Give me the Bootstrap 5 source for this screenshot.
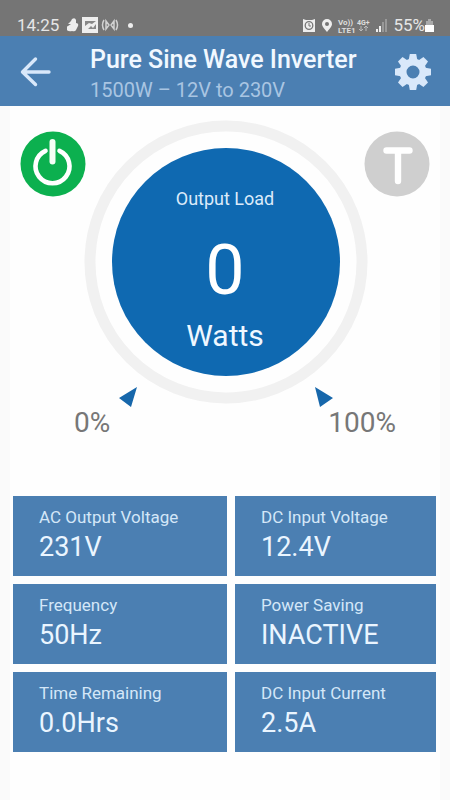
<!DOCTYPE html>
<html lang="en">
<head>
<meta charset="utf-8">
<meta name="viewport" content="width=device-width, initial-scale=1">
<title>Pure Sine Wave Inverter</title>
<link href="https://cdn.jsdelivr.net/npm/bootstrap@5.3.0/dist/css/bootstrap.min.css" rel="stylesheet">
<style>
  body { font-family: Roboto, "Liberation Sans", sans-serif; background: #fefefe; }
  .status-bar { background: #757575; color: #e6e6e6; height: 36px; padding: 13px 16px 0 17px; font-size: 17px; line-height: 24px; }
  .status-bar svg { display: block; }
  .app-bar { background: #4b7fb2; height: 70px; padding: 2px 18px 0 20px; color: #d9e8fa; }
  .app-titles { margin-left: 39px; padding-top: 6px; }
  .app-title { font-size: 25px; line-height: 30px; font-weight: 500; color: #f1f8ff; }
  .app-sub { font-size: 20px; line-height: 30px; color: #a9c5e2; }
  .icon-button { background: none; border: 0; padding: 0; color: inherit; line-height: 0; }
  .screen { border: solid #fafafa; border-width: 0 10px; min-height: calc(100vh - 106px); padding: 13px 4px 0 3px; }
  .stack { grid-template: auto / 1fr; }
  .stack > * { grid-area: 1 / 1; }
  .round-row { margin: 12px 6px 0 7px; }
  .dial { padding-left: 3px; }
  .dial-text { color: #fff; padding: 67px 0 0 1px; }
  .dial-name { font-size: 18px; line-height: 26px; color: #dcebfa; }
  .dial-value { font-size: 70px; line-height: 80px; margin-top: 18px; }
  .dial-unit { font-size: 30px; line-height: 36px; margin-top: 8px; color: #eff7ff; }
  .scale-row { font-size: 28px; line-height: 34px; color: #777; margin: -3px 40px 0 61px; }
  .tiles { grid-template-columns: 214fr 201fr; gap: 8px; margin-top: 56px; }
  .tile { background: #4b7fb2; padding: 8px 8px 12px 26px; color: #eaf5ff; }
  .tile dt { font-size: 17px; line-height: 26px; font-weight: 400; color: #d4e7f8; }
  .tile dd { font-size: 27px; line-height: 34px; margin: 0; }
</style>
<script src="https://cdn.jsdelivr.net/npm/bootstrap@5.3.0/dist/js/bootstrap.bundle.min.js"></script>
</head>
<body>
<div class="status-bar d-flex justify-content-between">
  <div class="d-flex align-items-center">
    <span>14:25</span>
    <svg class="ms-2" width="68" height="18" viewBox="0 0 68 18" fill="#eee" aria-hidden="true">
      <path d="M5 3q3-2 4 1v3q3 0 2 3l-2 4q-1 2-4 1-4 1-6-2 0-2 2-3L4 8H1l3-3z"/>
      <path fill-rule="evenodd" d="M15 1h16v16H15zM18 12h11V5l-4 3-3-1-4 3z"/>
      <path fill="#888" d="M18 13V5h11v8z"/><path d="M18 10l4-3 3 1 4-3v3l-3 4-2-2-3 3h-3z"/>
      <g fill="none" stroke="#d2d2d2" stroke-width="1.500"><path d="M37 4q-3 5 0 10M49 4q3 5 0 10M39 5l3 4-3 4zM47 5l-3 4 3 4z"/></g>
      <circle cx="63.500" cy="9.500" r="2.500"/>
    </svg>
  </div>
  <div class="d-flex align-items-center">
    <svg width="86" height="18" viewBox="0 0 86 18" fill="#eee" aria-hidden="true">
      <path d="M0 3l3 1h6l3-1v13H0z"/><circle cx="6" cy="9.500" r="3.800" fill="none" stroke="#777" stroke-width="1.300"/><path d="M6 7v3h2" fill="none" stroke="#777"/>
      <path fill-rule="evenodd" d="M24 3a5 5 0 0 1 5 5c0 3-3 5-5 8-2-3-5-5-5-8a5 5 0 0 1 5-5zm0 3a2 2 0 1 0 0 4 2 2 0 0 0 0-4z"/>
      <g fill="#dedede" font-family="Roboto, sans-serif" font-weight="700"><text x="35" y="9" font-size="8">Vo))</text><text x="35" y="17" font-size="8">LTE1</text><text x="54" y="9" font-size="7">4G+</text></g>
      <path d="M58 10v5m-2-2l2 2 2-2M63 15v-5m-2 2l2-2 2 2" fill="none" stroke="#bbb"/>
      <path d="M73 13h2v3h-2zM76 10h2v6h-2z"/><path fill="#999" d="M79 6h2v10h-2zM82 3h2v13h-2z"/>
    </svg>
    <span class="ms-1">55%</span>
    <svg width="9" height="16" viewBox="0 0 9 16" aria-hidden="true"><path fill="#aaa" d="M3 2h3v2h2v5H1V4h2z"/><path fill="#fff" d="M0 8h9v7H0z"/></svg>
  </div>
</div>

<header class="app-bar d-flex align-items-center">
  <button class="icon-button" type="button" aria-label="Back">
    <svg width="31" height="32" viewBox="0 0 31 32" fill="none" stroke="currentColor" stroke-width="3.400" stroke-linecap="round" stroke-linejoin="round"><path d="M15.500 3L2.500 16l13 12.500M3 16h26"/></svg>
  </button>
  <div class="app-titles flex-grow-1 text-nowrap">
    <h1 class="app-title mb-0">Pure Sine Wave Inverter</h1>
    <div class="app-sub">1500W – 12V to 230V</div>
  </div>
  <button class="icon-button" type="button" aria-label="Settings">
    <svg width="38" height="38" viewBox="-19 -19 38 38" fill="currentColor">
      <defs><path id="tooth" d="M-4.500-11L-3.200-18h6.400L4.500-11z"/></defs>
      <use href="#tooth"/><use href="#tooth" transform="rotate(45)"/><use href="#tooth" transform="rotate(90)"/><use href="#tooth" transform="rotate(135)"/><use href="#tooth" transform="rotate(180)"/><use href="#tooth" transform="rotate(225)"/><use href="#tooth" transform="rotate(270)"/><use href="#tooth" transform="rotate(315)"/>
      <circle r="10" fill="none" stroke="currentColor" stroke-width="7"/>
    </svg>
  </button>
</header>

<main class="screen">
  <section class="stack d-grid">
    <div class="dial d-flex justify-content-center">
      <svg width="284" height="290" viewBox="0 0 284 290" aria-hidden="true">
        <circle cx="142" cy="143" r="136" fill="none" stroke="#f1f1f1" stroke-width="11"/>
        <circle cx="142" cy="143" r="114" fill="#0f69b1"/>
        <path fill="#1767ab" d="M53 268l-18 11 12 9zM231 268l18 11-13 9z"/>
      </svg>
    </div>
    <div class="dial-text text-center">
      <div class="dial-name">Output Load</div>
      <div class="dial-value">0</div>
      <div class="dial-unit">Watts</div>
    </div>
    <div class="round-row d-flex justify-content-between align-items-start">
      <button class="icon-button" type="button" aria-label="Power">
        <svg width="66" height="66" viewBox="0 0 66 66"><circle cx="33" cy="33" r="32.500" fill="#0cb04f"/><path d="M25.500 19.800a17 17 0 1 0 14 0" fill="none" stroke="#fff" stroke-width="4.600" stroke-linecap="round"/><path d="M32.500 11v19.500" stroke="#f4fff6" stroke-width="6" stroke-linecap="round"/></svg>
      </button>
      <button class="icon-button" type="button" aria-label="Timer">
        <svg width="66" height="66" viewBox="0 0 66 66"><circle cx="33" cy="33" r="32.500" fill="#cfcfcf"/><path d="M22.500 19.500h23M34 20v30" fill="none" stroke="#fff" stroke-width="6.400" stroke-linecap="round"/></svg>
      </button>
    </div>
  </section>
  <div class="scale-row d-flex justify-content-between"><span>0%</span><span>100%</span></div>

  <dl class="tiles d-grid mb-0">
    <div class="tile"><dt>AC Output Voltage</dt><dd>231V</dd></div>
    <div class="tile"><dt>DC Input Voltage</dt><dd>12.4V</dd></div>
    <div class="tile"><dt>Frequency</dt><dd>50Hz</dd></div>
    <div class="tile"><dt>Power Saving</dt><dd>INACTIVE</dd></div>
    <div class="tile"><dt>Time Remaining</dt><dd>0.0Hrs</dd></div>
    <div class="tile"><dt>DC Input Current</dt><dd>2.5A</dd></div>
  </dl>
</main>
</body>
</html>
